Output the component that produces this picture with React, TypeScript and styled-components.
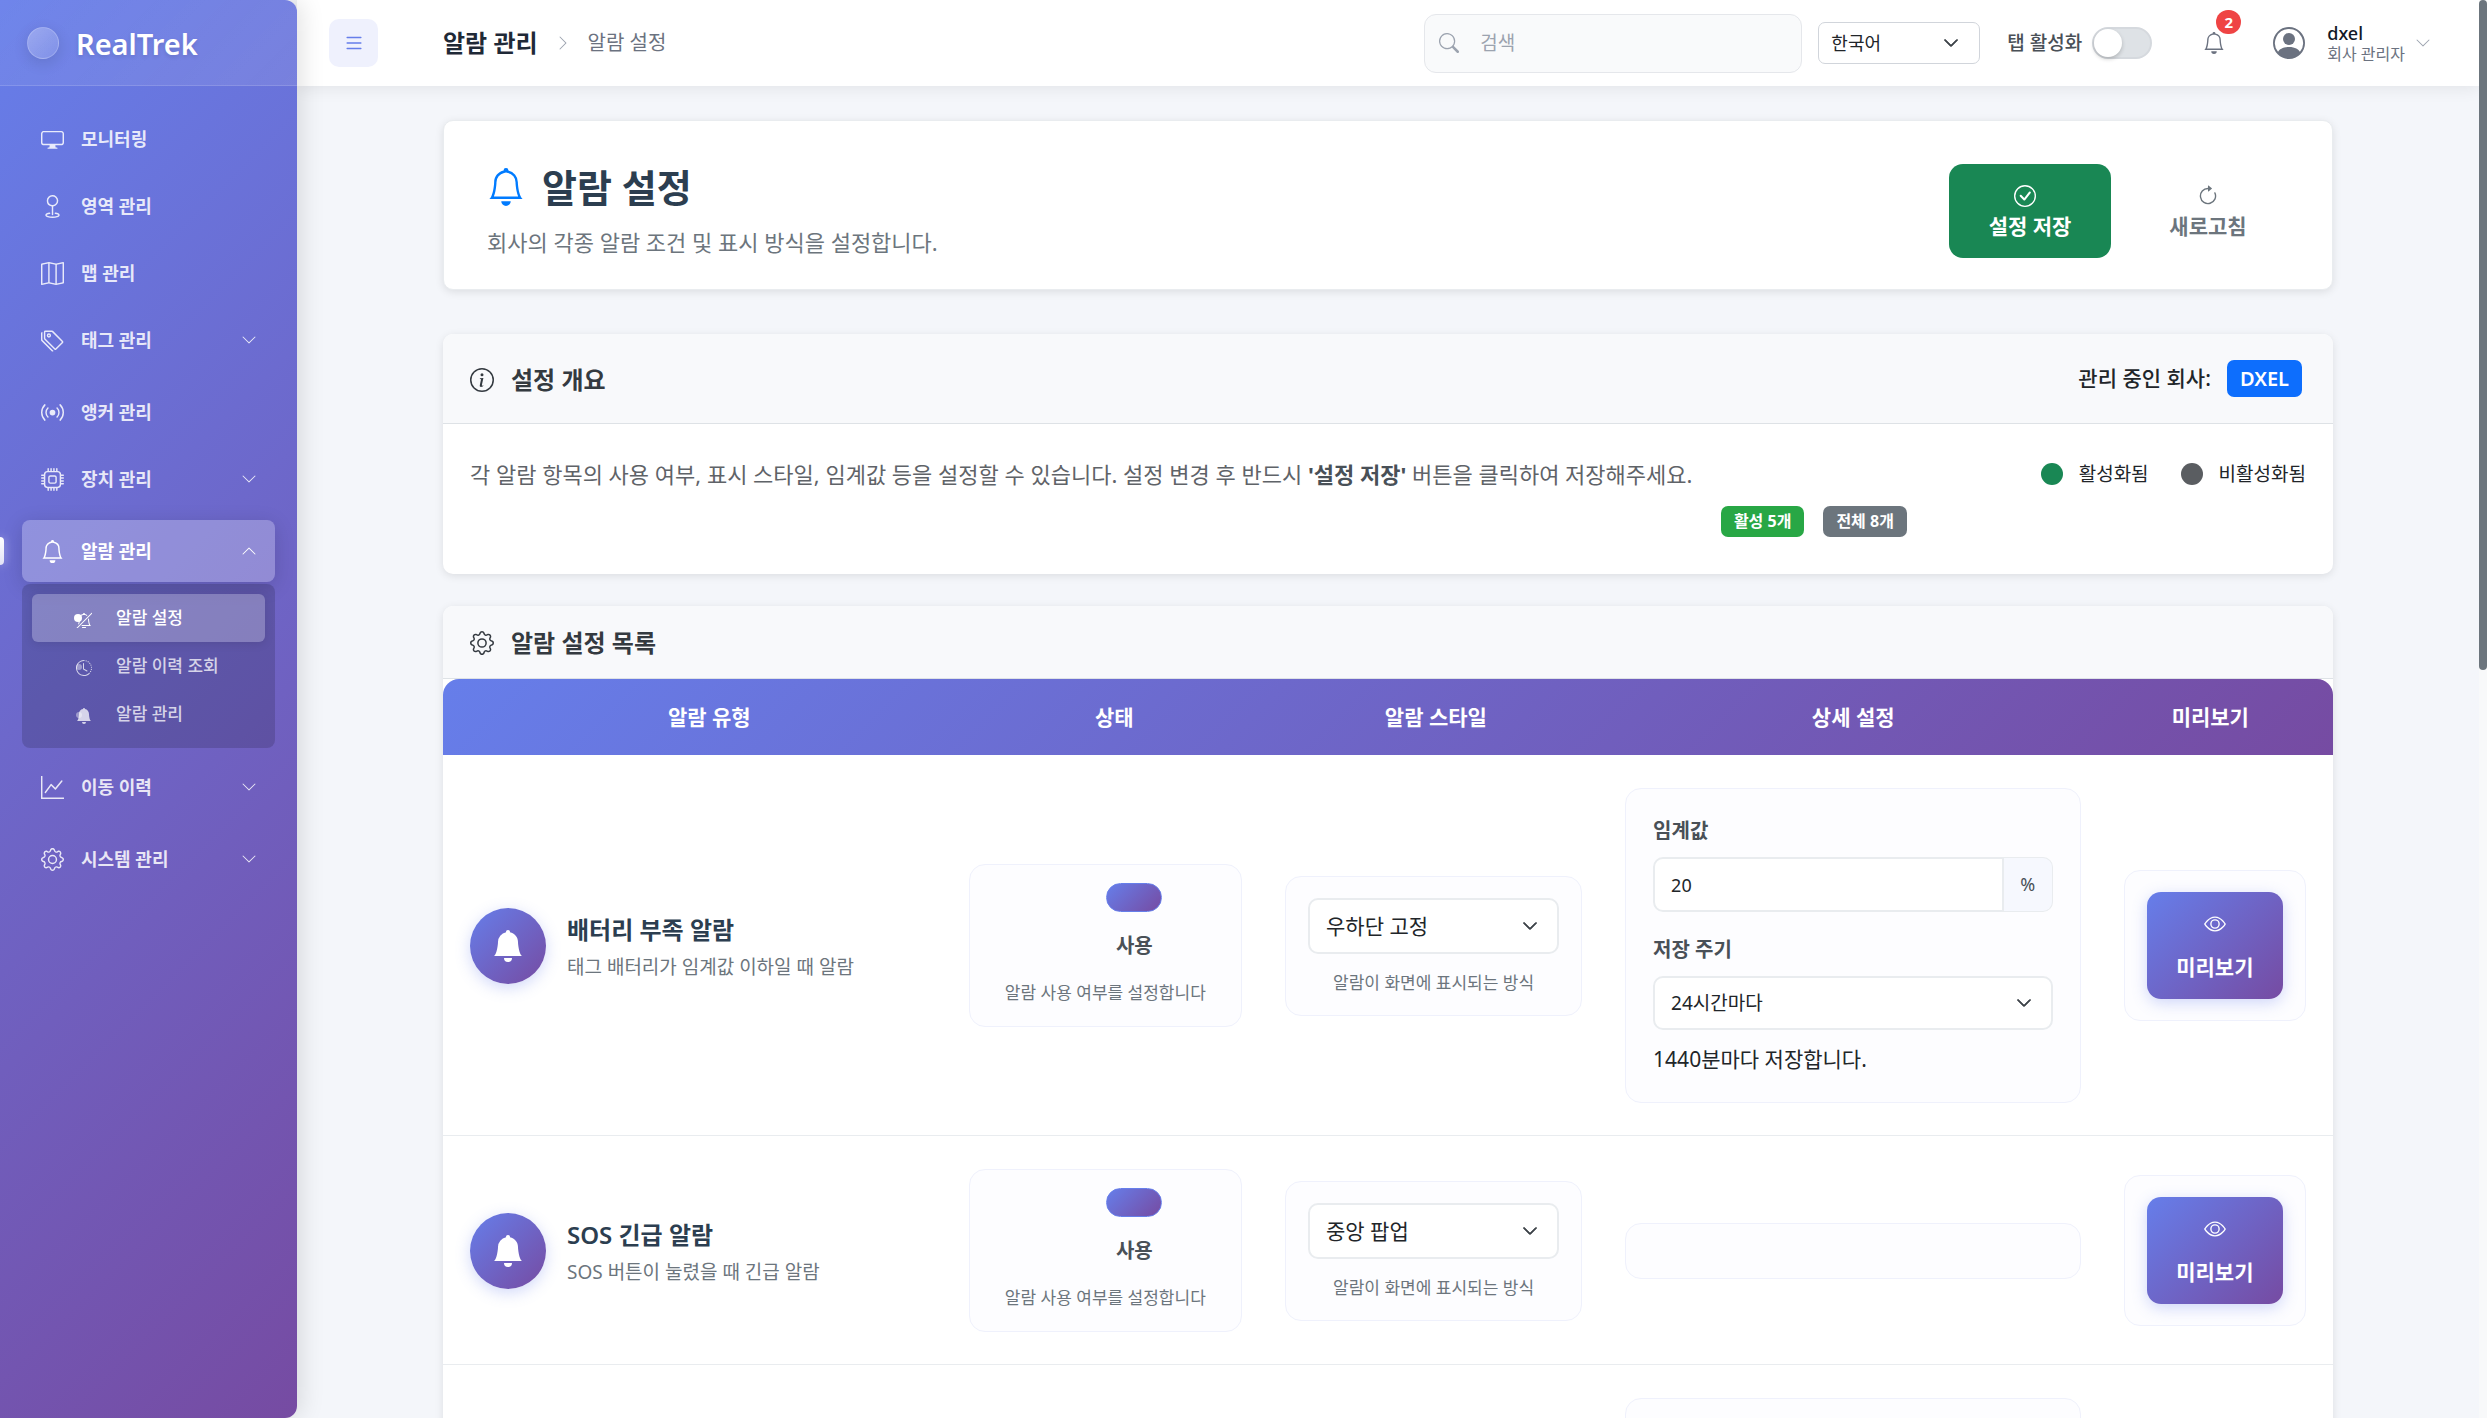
import React from 'react';
import styled, { createGlobalStyle, css } from 'styled-components';
import {
  BsArrowClockwise,
  BsBell,
  BsBellFill,
  BsBellSlash,
  BsBroadcast,
  BsCheckCircle,
  BsChevronDown,
  BsChevronRight,
  BsChevronUp,
  BsClockHistory,
  BsCpu,
  BsDisplay,
  BsEye,
  BsGear,
  BsGeo,
  BsGraphUp,
  BsInfoCircle,
  BsList,
  BsMap,
  BsPersonCircle,
  BsSearch,
  BsTags,
} from 'react-icons/bs';
import type { IconType } from 'react-icons';

const brandGradient = 'linear-gradient(135deg, #667eea 0%, #764ba2 100%)';

const GlobalStyle = createGlobalStyle`
  *, *::before, *::after { box-sizing: border-box; }
  body {
    margin: 0;
    background: #f4f6fa;
    color: #212529;
    font-family: "Noto Sans", "Noto Sans CJK KR", sans-serif;
    font-size: 21px;
    line-height: 1.5;
    overflow: hidden;
  }
  button, input, select { font-family: inherit; color: inherit; }
  button { cursor: pointer; }
  h1, h2, h3, p, ul { margin: 0; padding: 0; }
  ul { list-style: none; }
  a { color: inherit; text-decoration: none; }
  svg { display: block; flex: none; }
`;

const Shell = styled.div`
  display: flex;
  height: 100vh;
  overflow: hidden;
`;

/* ---------- sidebar ---------- */

const Sidebar = styled.aside`
  position: relative;
  z-index: 3;
  flex: 0 0 297px;
  background: ${brandGradient};
  border-radius: 0 12px 12px 0;
  box-shadow: 4px 0 24px rgba(0, 0, 0, 0.12);
  color: #fff;
`;

const Brand = styled.div`
  display: flex;
  align-items: center;
  gap: 17px;
  height: 86px;
  padding: 0 27px;
  border-bottom: 1px solid rgba(255, 255, 255, 0.15);
  background: linear-gradient(135deg, rgba(255, 255, 255, 0.06), rgba(255, 255, 255, 0.1));
  border-top-right-radius: 12px;
`;

const BrandMark = styled.span`
  width: 32px;
  height: 32px;
  border-radius: 50%;
  border: 1px solid rgba(255, 255, 255, 0.2);
  background: linear-gradient(135deg, rgba(255, 255, 255, 0.3), rgba(255, 255, 255, 0.1));
  box-shadow: 0 4px 15px rgba(0, 0, 0, 0.12);
`;

const BrandName = styled.span`
  padding-top: 2px;
  font-size: 29px;
  font-weight: 600;
  text-shadow: 0 2px 4px rgba(0, 0, 0, 0.12);
`;

const Menu = styled.ul`
  display: flex;
  flex-direction: column;
  gap: 5px;
  padding: 22px 22px;
`;

const MenuItem = styled.li<{ $group?: boolean; $open?: boolean }>`
  position: relative;
  padding-bottom: ${(p) => (p.$open ? 3 : p.$group ? 5 : 0)}px;
`;

const ActiveMarker = styled.span`
  position: absolute;
  left: -22px;
  top: 17px;
  width: 4px;
  height: 28px;
  border-radius: 0 4px 4px 0;
  background: linear-gradient(180deg, #fff, rgba(255, 255, 255, 0.8));
  box-shadow: 0 0 10px rgba(255, 255, 255, 0.5);
`;

const MenuLink = styled.a<{ $active?: boolean }>`
  display: flex;
  align-items: center;
  gap: 17px;
  height: 62px;
  padding: 0 18px 0 19px;
  border-radius: 8px;
  font-size: 18px;
  font-weight: 600;
  color: rgba(255, 255, 255, 0.85);
  ${(p) =>
    p.$active &&
    css`
      color: #fff;
      font-weight: 700;
      background: rgba(255, 255, 255, 0.25);
      box-shadow: 0 4px 20px rgba(0, 0, 0, 0.15);
    `}
`;

const MenuLabel = styled.span`
  flex: 1;
`;

const Submenu = styled.ul`
  margin-top: 2px;
  padding: 10px;
  border-radius: 8px;
  background: rgba(0, 0, 0, 0.15);
`;

const SubLink = styled.a<{ $active?: boolean }>`
  position: relative;
  display: flex;
  align-items: center;
  gap: 24px;
  height: 48px;
  padding-left: 44px;
  border-radius: 6px;
  font-size: 17px;
  font-weight: 500;
  color: rgba(255, 255, 255, 0.75);
  ${(p) =>
    p.$active &&
    css`
      color: #fff;
      background: rgba(255, 255, 255, 0.25);
      box-shadow: 0 2px 10px rgba(0, 0, 0, 0.1);
    `}
  &::before {
    content: '';
    position: absolute;
    left: ${(p) => (p.$active ? 42 : 44)}px;
    top: ${(p) => (p.$active ? 20 : 22)}px;
    width: ${(p) => (p.$active ? 8 : 6)}px;
    height: ${(p) => (p.$active ? 8 : 6)}px;
    border-radius: 50%;
    background: ${(p) => (p.$active ? '#fff' : 'rgba(255, 255, 255, 0.4)')};
  }
  svg {
    margin-top: 4px;
  }
`;

/* ---------- top bar ---------- */

const Page = styled.div`
  flex: 1;
  min-width: 0;
  display: flex;
  flex-direction: column;
`;

const TopBar = styled.header`
  position: relative;
  z-index: 2;
  flex: none;
  display: flex;
  align-items: center;
  height: 86px;
  padding: 0 48px 0 32px;
  background: #fff;
  box-shadow: 0 2px 16px rgba(0, 0, 0, 0.08);
`;

const MenuToggle = styled.button`
  display: grid;
  place-items: center;
  width: 49px;
  height: 48px;
  padding: 0;
  border: 0;
  border-radius: 10px;
  background: #eff1fd;
  color: #667eea;
`;

const Breadcrumb = styled.nav`
  display: flex;
  align-items: center;
  gap: 17px;
  margin-left: 65px;
  font-size: 20px;
  color: #6b7280;
  svg {
    color: #9ca3af;
  }
`;

const BreadcrumbRoot = styled.strong`
  font-size: 24px;
  font-weight: 700;
  color: #1f2937;
`;

const Tools = styled.div`
  display: flex;
  align-items: center;
  margin-left: auto;
`;

const SearchBox = styled.label`
  display: flex;
  align-items: center;
  gap: 19px;
  width: 378px;
  height: 59px;
  padding: 0 14px;
  border: 1px solid #e5e7eb;
  border-radius: 12px;
  background: #f9fafb;
  color: #9ca3af;
`;

const SearchInput = styled.input`
  flex: 1;
  min-width: 0;
  border: 0;
  outline: 0;
  background: none;
  font-size: 19px;
  &::placeholder {
    color: #9ca3af;
    opacity: 1;
  }
`;

const SelectWrap = styled.span`
  position: relative;
  display: block;
  color: #343a40;
  svg {
    position: absolute;
    right: 21px;
    top: 50%;
    margin-top: -8px;
    pointer-events: none;
    stroke: currentColor;
    stroke-width: 1;
  }
`;

const Select = styled.select<{ $size: 'small' | 'medium' | 'large' }>`
  display: block;
  width: 100%;
  appearance: none;
  background: #fff;
  color: #212529;
  ${(p) =>
    p.$size === 'small'
      ? css`
          height: 42px;
          padding: 0 12px;
          border: 1px solid #d1d5db;
          border-radius: 7px;
          font-size: 18px;
        `
      : css`
          height: ${p.$size === 'medium' ? 54 : 56}px;
          padding: 0 16px;
          border: 2px solid #e9ecef;
          border-radius: 10px;
          font-size: ${p.$size === 'medium' ? 19 : 21}px;
        `}
`;

const LanguageSelect = styled(SelectWrap)`
  width: 162px;
  margin-left: 16px;
`;

const TabSwitch = styled.label`
  display: flex;
  align-items: center;
  gap: 10px;
  margin-left: 27px;
  font-size: 19px;
  font-weight: 500;
  color: #495057;
`;

const TabSwitchInput = styled.input`
  appearance: none;
  width: 60px;
  height: 32px;
  margin: 0;
  border-radius: 16px;
  background: #dee2e6;
  border: 2px solid #d5d9de;
  &::before {
    content: '';
    display: block;
    width: 28px;
    height: 28px;
    border-radius: 50%;
    background: #fff;
    box-shadow: 0 2px 4px rgba(0, 0, 0, 0.2);
  }
`;

const BellButton = styled.button`
  position: relative;
  display: grid;
  place-items: center;
  width: 44px;
  height: 44px;
  margin-left: 40px;
  padding: 0;
  border: 0;
  background: none;
  color: #6b7280;
`;

const BellBadge = styled.span`
  position: absolute;
  top: -11px;
  right: -5px;
  width: 25px;
  height: 24px;
  border-radius: 12px;
  background: #ef4444;
  color: #fff;
  font-size: 15px;
  font-weight: 700;
  line-height: 24px;
  text-align: center;
`;

const UserButton = styled.button`
  display: flex;
  align-items: center;
  margin-left: 37px;
  padding: 0;
  border: 0;
  background: none;
  color: #6b7280;
  text-align: left;
`;

const UserText = styled.span`
  display: flex;
  flex-direction: column;
  margin: 0 10px 0 22px;
`;

const UserName = styled.span`
  font-size: 18px;
  font-weight: 500;
  line-height: 22px;
  color: #111827;
`;

const UserRole = styled.span`
  font-size: 16px;
  line-height: 20px;
`;

const Caret = styled.span`
  color: #9ca3af;
`;

/* ---------- content ---------- */

const Content = styled.main`
  flex: 1;
  min-height: 0;
  overflow: hidden;
  padding: 34px 146px 0;
`;

const ScrollTrack = styled.div`
  position: relative;
  z-index: 4;
  flex: 0 0 8px;
  background: #f8f9fa;
`;

const ScrollThumb = styled.div`
  height: 47.25%;
  border-radius: 4px;
  background: #6c757d;
`;

const Card = styled.section`
  border-radius: 10px;
  background: #fff;
  box-shadow: 0 2px 8px rgba(0, 0, 0, 0.1);
`;

const HeroCard = styled(Card)`
  display: flex;
  justify-content: space-between;
  padding: 43px 43px 31px;
  border: 1px solid #e9ecef;
`;

const HeroTitle = styled.h1`
  display: flex;
  align-items: center;
  gap: 17px;
  margin-bottom: 16px;
  font-size: 38px;
  font-weight: 700;
  line-height: 46px;
  color: #2c3e50;
  svg {
    color: #007bff;
  }
`;

const HeroLead = styled.p`
  font-size: 22px;
  line-height: 32px;
  color: #6c757d;
`;

const HeroActions = styled.div`
  display: flex;
  gap: 16px;
`;

const HeroButton = styled.button<{ $primary?: boolean }>`
  display: flex;
  flex-direction: column;
  align-items: center;
  justify-content: center;
  gap: 3px;
  width: 162px;
  height: 94px;
  padding: 4px 0 0;
  border: 0;
  border-radius: 14px;
  background: ${(p) => (p.$primary ? '#198754' : 'transparent')};
  color: ${(p) => (p.$primary ? '#fff' : '#6c757d')};
  font-size: 21px;
  font-weight: ${(p) => (p.$primary ? 700 : 600)};
  line-height: 32px;
  svg {
    margin-right: ${(p) => (p.$primary ? 11 : 0)}px;
  }
`;

const OverviewCard = styled(Card)`
  margin-top: 44px;
`;

const ListCard = styled(Card)`
  margin-top: 32px;
`;

const CardHeader = styled.div<{ $tall?: boolean }>`
  display: flex;
  align-items: center;
  justify-content: space-between;
  height: ${(p) => (p.$tall ? 90 : 73)}px;
  padding: 0 31px 0 27px;
  border-bottom: 1px solid #dee2e6;
  border-radius: 10px 10px 0 0;
  background: #f8f9fb;
`;

const CardTitle = styled.h2`
  display: flex;
  align-items: center;
  gap: 17px;
  padding-top: 2px;
  font-size: 24px;
  font-weight: 600;
  color: #343a40;
`;

const Company = styled.div`
  display: flex;
  align-items: center;
  gap: 16px;
  font-size: 21px;
  font-weight: 500;
`;

const CompanyTag = styled.span`
  padding: 0 13px;
  border-radius: 7px;
  background: #0d6efd;
  color: #fff;
  font-size: 20px;
  font-weight: 600;
  line-height: 37px;
`;

const OverviewBody = styled.div`
  display: grid;
  grid-template-columns: 36fr 10fr;
  row-gap: 15px;
  padding: 33px 27px 37px;
`;

const OverviewText = styled.p`
  font-size: 22px;
  line-height: 34px;
  white-space: nowrap;
  color: #5f6368;
  strong {
    font-weight: 700;
    color: #495057;
  }
`;

const Legend = styled.ul`
  display: flex;
  justify-content: flex-end;
  align-items: center;
  gap: 32px;
  font-size: 19px;
  white-space: nowrap;
`;

const LegendItem = styled.li<{ $color: string }>`
  display: flex;
  align-items: center;
  gap: 16px;
  &::before {
    content: '';
    width: 22px;
    height: 22px;
    border-radius: 50%;
    background: ${(p) => p.$color};
  }
`;

const Counters = styled.div`
  display: flex;
  justify-content: flex-end;
  gap: 19px;
`;

const Counter = styled.span<{ $color: string }>`
  padding: 0 13px;
  border-radius: 7px;
  background: ${(p) => p.$color};
  color: #fff;
  font-size: 16px;
  font-weight: 700;
  line-height: 31px;
`;

/* ---------- alarm table ---------- */

const AlarmTable = styled.table`
  display: block;
  background: #fff;
`;

const TableHead = styled.thead`
  display: block;
  border-radius: 16px 16px 0 0;
  background: ${brandGradient};
  color: #fff;
`;

const TableBody = styled.tbody`
  display: block;
`;

const tableGrid = css`
  display: grid;
  grid-template-columns: 250fr 150fr 163fr 250fr 100fr;
  align-items: center;
`;

const HeadRow = styled.tr`
  ${tableGrid}
  column-gap: 22px;
  height: 76px;
  padding: 2px 27px 0;
`;

const HeadCell = styled.th`
  padding: 0;
  font-size: 21px;
  font-weight: 700;
  text-align: center;
`;

const Row = styled.tr`
  ${tableGrid}
  column-gap: 43px;
  padding: 33px 27px 32px;
  border-bottom: 1px solid #e9ecef;
`;

const Cell = styled.td`
  display: block;
  min-width: 0;
  padding: 0;
`;

const AlarmType = styled.div`
  display: flex;
  align-items: center;
  gap: 21px;
`;

const AlarmIcon = styled.span`
  display: grid;
  place-items: center;
  flex: none;
  width: 76px;
  height: 76px;
  border-radius: 50%;
  background: ${brandGradient};
  box-shadow: 0 4px 15px rgba(102, 126, 234, 0.3);
  color: #fff;
`;

const AlarmText = styled.div`
  display: flex;
  flex-direction: column;
  gap: 2px;
  padding-top: 4px;
`;

const AlarmName = styled.h3`
  font-size: 24px;
  font-weight: 600;
  line-height: 36px;
  color: #2c3e50;
`;

const AlarmNote = styled.p`
  font-size: 19px;
  line-height: 34px;
  color: #6c757d;
`;

const Panel = styled.div<{ $pad?: string; $min?: number }>`
  display: flex;
  flex-direction: column;
  min-height: ${(p) => p.$min ?? 0}px;
  padding: ${(p) => p.$pad ?? '21px 22px'};
  border: 1px solid #eff1fc;
  border-radius: 16px;
  background: #fdfdff;
`;

const Hint = styled.p`
  font-size: 17px;
  line-height: 26px;
  text-align: center;
  white-space: nowrap;
  color: #6c757d;
`;

const UseSwitch = styled.label`
  display: flex;
  flex-direction: column;
  align-items: center;
  gap: 18px;
  margin-bottom: 18px;
  padding-left: 58px;
  font-size: 20px;
  font-weight: 600;
  line-height: 32px;
  color: #495057;
`;

const UseSwitchInput = styled.input`
  appearance: none;
  width: 56px;
  height: 29px;
  margin: 0;
  border-radius: 15px;
  border: 1px solid #667eea;
  background: ${brandGradient};
`;

const StyleSelect = styled(SelectWrap)`
  margin-bottom: 16px;
`;

const FieldLabel = styled.label`
  font-size: 20px;
  font-weight: 600;
  line-height: 30px;
  color: #495057;
`;

const InputGroup = styled.div`
  display: flex;
  height: 55px;
  margin: 11px 0 23px;
`;

const NumberInput = styled.input`
  flex: 1;
  min-width: 0;
  padding: 0 16px;
  border: 2px solid #e9ecef;
  border-radius: 10px 0 0 10px;
  background: #fff;
  color: #212529;
  font-size: 18px;
`;

const InputUnit = styled.span`
  display: grid;
  place-items: center;
  width: 49px;
  border: 1px solid #e9ecef;
  border-left: 0;
  border-radius: 0 10px 10px 0;
  background: #f6f8fe;
  color: #495057;
  font-size: 18px;
`;

const PeriodSelect = styled(SelectWrap)`
  margin: 11px 0 13px;
`;

const PeriodNote = styled.p`
  font-size: 21px;
  line-height: 32px;
`;

const PreviewButton = styled.button`
  display: flex;
  flex-direction: column;
  align-items: center;
  justify-content: center;
  gap: 15px;
  width: 100%;
  height: 107px;
  padding: 6px 0 0;
  border: 0;
  border-radius: 14px;
  background: ${brandGradient};
  box-shadow: 0 4px 15px rgba(102, 126, 234, 0.3);
  color: #fff;
  font-size: 21px;
  font-weight: 700;
  line-height: 34px;
`;

type NavEntry = { label: string; icon: IconType; children?: boolean; active?: boolean };

const navEntries: NavEntry[] = [
  { label: '모니터링', icon: BsDisplay },
  { label: '영역 관리', icon: BsGeo },
  { label: '맵 관리', icon: BsMap },
  { label: '태그 관리', icon: BsTags, children: true },
  { label: '앵커 관리', icon: BsBroadcast },
  { label: '장치 관리', icon: BsCpu, children: true },
  { label: '알람 관리', icon: BsBell, children: true, active: true },
  { label: '이동 이력', icon: BsGraphUp, children: true },
  { label: '시스템 관리', icon: BsGear, children: true },
];

const subEntries: NavEntry[] = [
  { label: '알람 설정', icon: BsBellSlash, active: true },
  { label: '알람 이력 조회', icon: BsClockHistory },
  { label: '알람 관리', icon: BsBellFill },
];

type Alarm = { id: string; name: string; note: string; style: string; threshold?: number };

const alarms: Alarm[] = [
  { id: 'battery', name: '배터리 부족 알람', note: '태그 배터리가 임계값 이하일 때 알람', style: '우하단 고정', threshold: 20 },
  { id: 'sos', name: 'SOS 긴급 알람', note: 'SOS 버튼이 눌렸을 때 긴급 알람', style: '중앙 팝업' },
];

function AlarmRow({ alarm }: { alarm: Alarm }) {
  return (
    <Row>
      <Cell>
        <AlarmType>
          <AlarmIcon>
            <BsBellFill size={32} />
          </AlarmIcon>
          <AlarmText>
            <AlarmName>{alarm.name}</AlarmName>
            <AlarmNote>{alarm.note}</AlarmNote>
          </AlarmText>
        </AlarmType>
      </Cell>
      <Cell>
        <Panel $pad="18px 21px 20px">
          <UseSwitch>
            <UseSwitchInput type="checkbox" defaultChecked />
            사용
          </UseSwitch>
          <Hint>알람 사용 여부를 설정합니다</Hint>
        </Panel>
      </Cell>
      <Cell>
        <Panel $pad="21px 22px 19px">
          <StyleSelect>
            <Select $size="large" aria-label="알람 스타일" defaultValue={alarm.style}>
              <option>{alarm.style}</option>
            </Select>
            <BsChevronDown size={16} />
          </StyleSelect>
          <Hint>알람이 화면에 표시되는 방식</Hint>
        </Panel>
      </Cell>
      <Cell>
        <Panel $pad="27px">
          {alarm.threshold !== undefined && (
            <>
              <FieldLabel htmlFor={`${alarm.id}-threshold`}>임계값</FieldLabel>
              <InputGroup>
                <NumberInput id={`${alarm.id}-threshold`} defaultValue={alarm.threshold} />
                <InputUnit>%</InputUnit>
              </InputGroup>
              <FieldLabel htmlFor={`${alarm.id}-period`}>저장 주기</FieldLabel>
              <PeriodSelect>
                <Select $size="medium" id={`${alarm.id}-period`}>
                  <option>24시간마다</option>
                </Select>
                <BsChevronDown size={16} />
              </PeriodSelect>
              <PeriodNote>1440분마다 저장합니다.</PeriodNote>
            </>
          )}
        </Panel>
      </Cell>
      <Cell>
        <Panel>
          <PreviewButton type="button">
            <BsEye size={22} />
            미리보기
          </PreviewButton>
        </Panel>
      </Cell>
    </Row>
  );
}

export default function App() {
  return (
    <>
      <GlobalStyle />
      <Shell>
        <Sidebar>
          <Brand>
            <BrandMark />
            <BrandName>RealTrek</BrandName>
          </Brand>
          <nav>
            <Menu>
              {navEntries.map(({ label, icon: Icon, children, active }) => (
                <MenuItem key={label} $group={children} $open={active}>
                  {active && <ActiveMarker />}
                  <MenuLink href="#" $active={active}>
                    <Icon size={23} />
                    <MenuLabel>{label}</MenuLabel>
                    {children && (active ? <BsChevronUp size={16} /> : <BsChevronDown size={16} />)}
                  </MenuLink>
                  {active && (
                    <Submenu>
                      {subEntries.map(({ label: text, icon: SubIcon, active: on }) => (
                        <li key={text}>
                          <SubLink href="#" $active={on}>
                            <SubIcon size={16} />
                            {text}
                          </SubLink>
                        </li>
                      ))}
                    </Submenu>
                  )}
                </MenuItem>
              ))}
            </Menu>
          </nav>
        </Sidebar>

        <Page>
          <TopBar>
            <MenuToggle type="button" aria-label="메뉴">
              <BsList size={22} />
            </MenuToggle>
            <Breadcrumb>
              <BreadcrumbRoot>알람 관리</BreadcrumbRoot>
              <BsChevronRight size={16} />
              <span>알람 설정</span>
            </Breadcrumb>
            <Tools>
              <SearchBox>
                <BsSearch size={20} />
                <SearchInput type="search" placeholder="검색" aria-label="검색" />
              </SearchBox>
              <LanguageSelect>
                <Select $size="small" aria-label="언어">
                  <option>한국어</option>
                </Select>
                <BsChevronDown size={16} />
              </LanguageSelect>
              <TabSwitch>
                탭 활성화
                <TabSwitchInput type="checkbox" />
              </TabSwitch>
              <BellButton type="button" aria-label="알림">
                <BsBell size={22} />
                <BellBadge>2</BellBadge>
              </BellButton>
              <UserButton type="button">
                <BsPersonCircle size={32} />
                <UserText>
                  <UserName>dxel</UserName>
                  <UserRole>회사 관리자</UserRole>
                </UserText>
                <Caret>
                  <BsChevronDown size={16} />
                </Caret>
              </UserButton>
            </Tools>
          </TopBar>

          <Content>
            <HeroCard>
              <div>
                <HeroTitle>
                  <BsBell size={38} />
                  알람 설정
                </HeroTitle>
                <HeroLead>회사의 각종 알람 조건 및 표시 방식을 설정합니다.</HeroLead>
              </div>
              <HeroActions>
                <HeroButton type="button" $primary>
                  <BsCheckCircle size={22} />
                  설정 저장
                </HeroButton>
                <HeroButton type="button">
                  <BsArrowClockwise size={22} />
                  새로고침
                </HeroButton>
              </HeroActions>
            </HeroCard>

            <OverviewCard>
              <CardHeader $tall>
                <CardTitle>
                  <BsInfoCircle size={24} />
                  설정 개요
                </CardTitle>
                <Company>
                  관리 중인 회사:
                  <CompanyTag>DXEL</CompanyTag>
                </Company>
              </CardHeader>
              <OverviewBody>
                <OverviewText>
                  각 알람 항목의 사용 여부, 표시 스타일, 임계값 등을 설정할 수 있습니다. 설정 변경 후 반드시{' '}
                  <strong>'설정 저장'</strong> 버튼을 클릭하여 저장해주세요.
                </OverviewText>
                <Legend>
                  <LegendItem $color="#198754">활성화됨</LegendItem>
                  <LegendItem $color="#5a5d61">비활성화됨</LegendItem>
                </Legend>
                <Counters>
                  <Counter $color="#28a745">활성 5개</Counter>
                  <Counter $color="#6c757d">전체 8개</Counter>
                </Counters>
              </OverviewBody>
            </OverviewCard>

            <ListCard>
              <CardHeader>
                <CardTitle>
                  <BsGear size={24} />
                  알람 설정 목록
                </CardTitle>
              </CardHeader>
              <AlarmTable>
                <TableHead>
                  <HeadRow>
                    <HeadCell>알람 유형</HeadCell>
                    <HeadCell>상태</HeadCell>
                    <HeadCell>알람 스타일</HeadCell>
                    <HeadCell>상세 설정</HeadCell>
                    <HeadCell>미리보기</HeadCell>
                  </HeadRow>
                </TableHead>
                <TableBody>
                  {alarms.map((alarm) => (
                    <AlarmRow key={alarm.id} alarm={alarm} />
                  ))}
                  <Row>
                    <Cell />
                    <Cell />
                    <Cell />
                    <Cell>
                      <Panel $min={316} />
                    </Cell>
                    <Cell />
                  </Row>
                </TableBody>
              </AlarmTable>
            </ListCard>
          </Content>
        </Page>
        <ScrollTrack aria-hidden="true">
          <ScrollThumb />
        </ScrollTrack>
      </Shell>
    </>
  );
}
